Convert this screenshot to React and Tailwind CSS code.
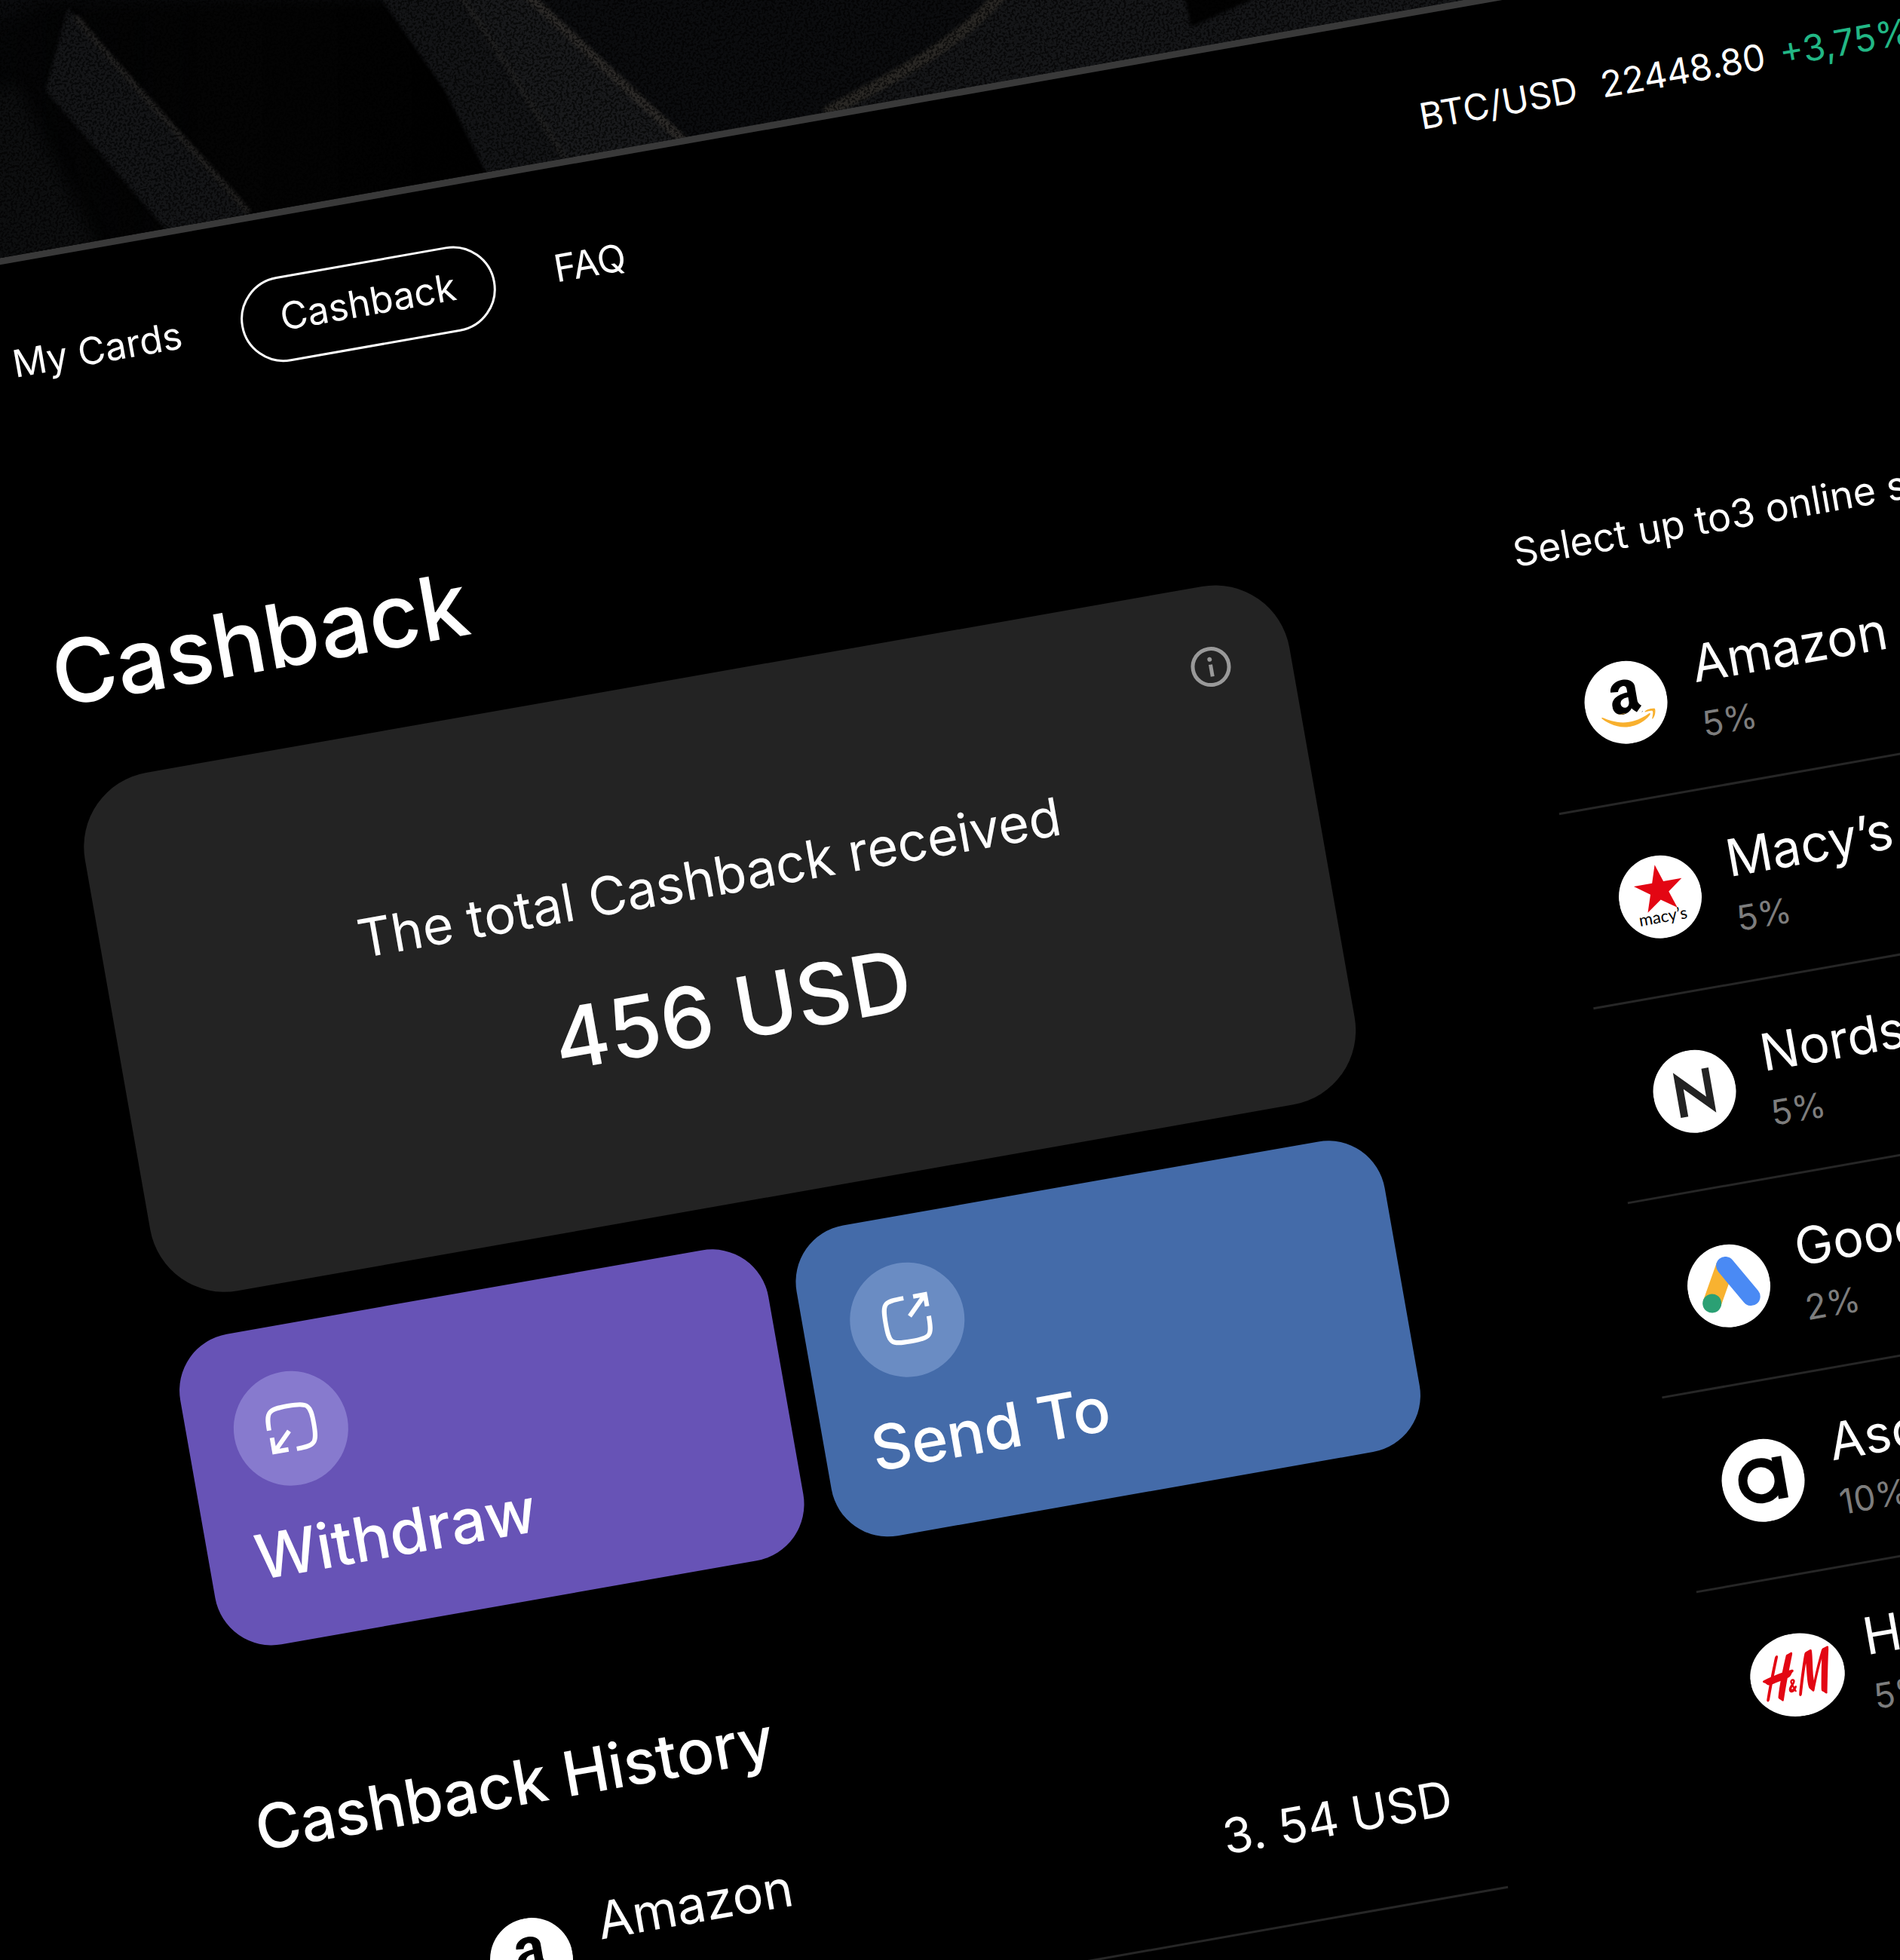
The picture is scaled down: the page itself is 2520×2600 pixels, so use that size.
import { FaAmazon } from "react-icons/fa";
import { SiHandm } from "react-icons/si";

function AmazonLogo() {
  return (
    <svg viewBox="-55 -55 110 110" className="size-[110px]" role="img" aria-label="Amazon logo">
      <circle r="55" fill="#fff" />
      <svg x="-19" y="-31" width="39" height="47" viewBox="118 30 290 342">
        <FaAmazon size={512} color="#000" />
      </svg>
      <svg x="-36" y="14" width="73" height="19" viewBox="36 367 440 114">
        <FaAmazon size={512} color="#f8b02e" />
      </svg>
    </svg>
  );
}

function MacysLogo() {
  return (
    <svg viewBox="-55 -55 110 110" className="size-[110px]" role="img" aria-label="Macy's logo">
      <circle r="55" fill="#fff" />
      <path
        fill="#e30613"
        d="M0-43 7.6-19.6H32.2L12.3-5.2 19.9 17.8 0 3.8-19.9 17.8-12.3-5.2-32.2-19.6H-7.6Z"
      />
      <text x="-1" y="34" textAnchor="middle" fontSize="22" className="font-['Lato',sans-serif]" fill="#000">
        macy’s
      </text>
    </svg>
  );
}

function NordstromLogo() {
  return (
    <svg viewBox="-55 -55 110 110" className="size-[110px]" role="img" aria-label="Nordstrom logo">
      <circle r="55" fill="#fff" />
      <path fill="#232323" d="M-24-29 14 9.500V-28H23.500V32.500L-14-5.500V31.500H-24Z" />
    </svg>
  );
}

function GoogleAdsLogo() {
  return (
    <svg viewBox="-55 -55 110 110" className="size-[110px]" role="img" aria-label="Google Ads logo">
      <circle r="55" fill="#fff" />
      <path d="M0-27-26 19" stroke="#f8b230" strokeWidth="24.500" />
      <path d="M0-27 26.500 19" stroke="#4a8af4" strokeWidth="24.500" strokeLinecap="round" />
      <circle cx="-26" cy="19" r="12.500" fill="#2ba074" />
    </svg>
  );
}

function AsosLogo() {
  return (
    <svg viewBox="-55 -55 110 110" className="size-[110px]" role="img" aria-label="Asos logo">
      <circle r="55" fill="#fff" />
      <circle cx="-3" r="24" fill="none" stroke="#000" strokeWidth="12" />
      <rect x="16" y="-28" width="13" height="56" fill="#000" />
    </svg>
  );
}

function HmLogo() {
  return (
    <svg viewBox="-63 -55 126 110" className="h-[110px] w-[126px] shrink-0" role="img" aria-label="H&M logo">
      <ellipse rx="63" ry="55" fill="#fff" />
      <svg x="-47" y="-47" width="94" height="94" viewBox="0 0 94 94">
        <SiHandm size={94} color="#e30613" />
      </svg>
    </svg>
  );
}

function WithdrawIcon() {
  return (
    <svg viewBox="-76 -76 152 152" className="size-full" fill="none" stroke="#fff" strokeWidth="6" aria-hidden="true">
      <path d="M-29-2C-29-27-26-30 1-30S31-27 31-1 28 28 3 28" />
      <path d="M-3 3-26 26M-27 8V27H-8" />
    </svg>
  );
}

function SendIcon() {
  return (
    <svg viewBox="-76 -76 152 152" className="size-full" fill="none" stroke="#fff" strokeWidth="6" aria-hidden="true">
      <path d="M0-29C-27-29-29-27-29 0S-27 29 0 29 29 27 29 0" />
      <path d="M4-4 28-28M13-29H29V-13" />
    </svg>
  );
}

function InfoIcon() {
  return (
    <svg viewBox="-27 -27 54 54" className="size-full" aria-hidden="true">
      <circle r="24" fill="none" stroke="#999" strokeWidth="5" />
      <circle cy="-10" r="3" fill="#999" />
      <path d="M0-3V13" stroke="#999" strokeWidth="5" />
    </svg>
  );
}

const STORES = [
  { name: "Amazon", rate: "5%", Logo: AmazonLogo },
  { name: "Macy’s", rate: "5%", Logo: MacysLogo },
  { name: "Nordstrom", rate: "5%", Logo: NordstromLogo },
  { name: "Google Ads", rate: "2%", Logo: GoogleAdsLogo },
  { name: "Asos", rate: "10%", Logo: AsosLogo },
  { name: "H&M", rate: "5%", Logo: HmLogo },
];

const HISTORY = [{ name: "Amazon", rate: "5%", amount: "3. 54 USD", Logo: AmazonLogo }];

function StoreRow({ name, rate, amount, Logo, divider }) {
  return (
    <li
      className={
        divider
          ? "flex items-center gap-10 border-b-3 border-[#262626] pt-[61px] pr-[53px] pb-[60px] pl-[58px]"
          : "flex items-center gap-10 pt-[61px] pr-[53px] pb-[60px] pl-[58px]"
      }
    >
      <div className="flex w-[110px] shrink-0 justify-center">
        <Logo />
      </div>
      <div className="flex grow flex-col gap-6">
        <span className="text-[68px] leading-none whitespace-nowrap">{name}</span>
        <span className="text-[46px] leading-none text-[#7d7d7d]">{rate}</span>
      </div>
      {amount && <span className="text-[64px] leading-none whitespace-nowrap">{amount}</span>}
    </li>
  );
}

function Hero() {
  return (
    <div className="h-[346px] border-b-9 border-[#393939] bg-[#0b0c0e]">
      <svg className="size-full" aria-hidden="true">
        <defs>
          <linearGradient id="shade" x1="0" x2="1" y1="0" y2="0">
            <stop offset="0" stopColor="#000" stopOpacity="0.4" />
            <stop offset="0.5" stopColor="#040404" />
            <stop offset="1" stopColor="#000" />
          </linearGradient>
          <filter id="soft" colorInterpolationFilters="sRGB">
            <feGaussianBlur stdDeviation="9" />
          </filter>
          <filter id="edge" colorInterpolationFilters="sRGB">
            <feGaussianBlur stdDeviation="2" />
          </filter>
          <filter id="grain" x="0" y="0" width="100%" height="100%" colorInterpolationFilters="sRGB">
            <feTurbulence type="fractalNoise" baseFrequency="0.35" numOctaves="2" />
            <feColorMatrix values="0 0 0 0 0  0 0 0 0 0  0 0 0 0 0  9 0 0 0 -4.3" />
          </filter>
        </defs>
        <g transform="translate(87 0) rotate(10)">
          <path d="M-100 80 60 0H520L690 230 0 420Z" fill="url(#shade)" filter="url(#soft)" />
          <path d="M-60 150 20 110 130 330-60 380Z" fill="#0d0e0f" filter="url(#soft)" />
          <path d="M90 10 330 285 225 310 60 120Z" fill="#141517" filter="url(#edge)" />
          <path d="M100 22C160 95 240 180 330 282" fill="none" stroke="#222120" strokeWidth="8" filter="url(#edge)" />
          <path d="M500-10H700L920 200 650 240 590 120Z" fill="#131416" filter="url(#edge)" />
          <path d="M610-10H700L910 185 750 215 660 70Z" fill="#18191b" filter="url(#edge)" />
          <path d="M608-10C650 50 700 130 752 215" fill="none" stroke="#1f1f1f" strokeWidth="8" filter="url(#edge)" />
          <path d="M696-10 908 188" fill="none" stroke="#2c2a28" strokeWidth="12" filter="url(#edge)" />
          <path d="M1100 150C1190 100 1270 60 1330-10H2000V60Z" fill="#151618" filter="url(#edge)" />
          <path d="M1095 150C1190 100 1270 60 1330-10" fill="none" stroke="#292724" strokeWidth="16" filter="url(#edge)" />
          <path d="M1570-10H1680L1580 36Z" fill="#020202" filter="url(#edge)" />
        </g>
        <rect width="100%" height="100%" filter="url(#grain)" opacity="0.6" />
      </svg>
    </div>
  );
}

export default function App() {
  return (
    <div className="h-screen overflow-hidden bg-black font-['Inter',sans-serif] text-white">
      <div className="-ml-[87px] w-[calc(100%+227px)] origin-[87px_0] -rotate-10">
        <Hero />

        <header className="flex items-baseline pt-[79px] pr-3">
          <nav className="flex w-[70%] items-baseline gap-20 pl-5 text-[50px] leading-none">
            <a href="#cards" className="whitespace-nowrap">
              My Cards
            </a>
            <a href="#cashback" aria-current="page" className="rounded-full border-3 border-white px-[50px] pt-[26px] pb-8">
              Cashback
            </a>
            <a href="#faq">FAQ</a>
          </nav>
          <p className="flex items-baseline text-[48px] leading-none whitespace-nowrap">
            <span>BTC/USD</span>
            <span className="ml-8">22448.80</span>
            <span className="ml-5 text-[#22b785]">+3,75%</span>
          </p>
        </header>

        <main className="grid grid-cols-[2fr_1fr] gap-[314px] pt-[297px]">
          <div>
            <h1 className="text-[117px] leading-none font-medium">Cashback</h1>

            <section className="relative mt-[90px] flex flex-col items-center gap-[86px] rounded-[100px] bg-[#232323] pt-[232px] pb-[198px]">
              <button type="button" aria-label="About cashback" className="absolute top-20 right-20 size-[54px]">
                <InfoIcon />
              </button>
              <p className="text-[70px] leading-none whitespace-nowrap">The total Cashback received</p>
              <p className="text-[112px] leading-none font-medium whitespace-nowrap">456 USD</p>
            </section>

            <div className="mt-[54px] grid grid-cols-2 gap-[38px]">
              <button
                type="button"
                className="flex flex-col items-start gap-[45px] rounded-[76px] bg-[#6753b6] px-[62px] pt-[62px] pb-[77px]"
              >
                <span className="size-[152px] rounded-full bg-[#877ace]">
                  <WithdrawIcon />
                </span>
                <span className="text-[82px] leading-none font-medium">Withdraw</span>
              </button>
              <button
                type="button"
                className="flex flex-col items-start gap-[45px] rounded-[76px] bg-[#446ba9] px-[62px] pt-[62px] pb-[77px]"
              >
                <span className="size-[152px] rounded-full bg-[#6a8cc3]">
                  <SendIcon />
                </span>
                <span className="text-[82px] leading-none font-medium">Send To</span>
              </button>
            </div>

            <section className="pt-[195px]">
              <h2 className="text-[82px] leading-none font-medium whitespace-nowrap">Cashback History</h2>
              <ul className="mt-[62px] ml-[217px]">
                {HISTORY.map((item) => (
                  <StoreRow key={item.name} {...item} divider />
                ))}
              </ul>
            </section>
          </div>

          <section className="pt-[210px]">
            <p className="text-[52px] leading-none whitespace-nowrap">Select up to3 online stores</p>
            <ul className="mt-16">
              {STORES.map((store, i) => (
                <StoreRow key={store.name} {...store} divider={i < STORES.length - 1} />
              ))}
            </ul>
          </section>
        </main>
      </div>
    </div>
  );
}
